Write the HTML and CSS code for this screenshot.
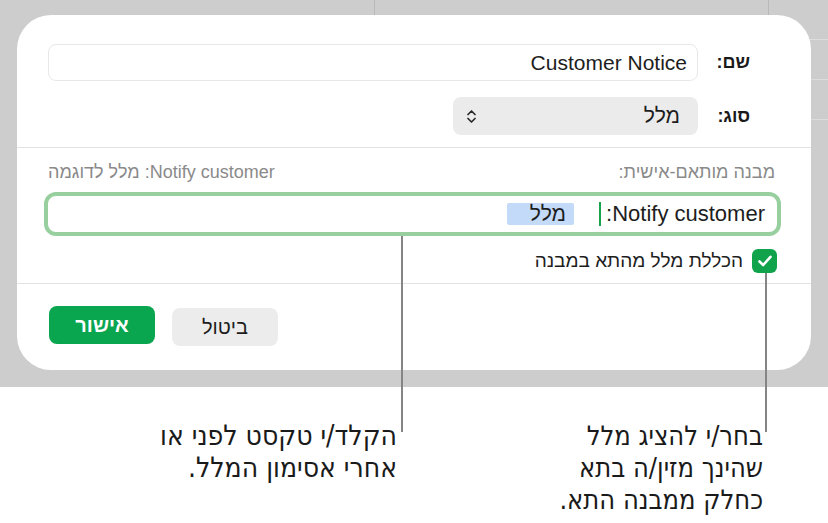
FILE: index.html
```html
<!DOCTYPE html>
<html lang="he">
<head>
  <meta charset="UTF-8">
  <meta name="viewport" content="width=device-width, initial-scale=1.0">
  <title>מבנה מותאם-אישית</title>
  <link rel="stylesheet" href="styles.css">
</head>
<body>
  <div class="page">
    <!-- Spreadsheet behind the dialog -->
    <div class="stage">
      <div class="dialog" dir="rtl">
        <div class="fields">
          <div class="row">
            <span class="label">שם:</span>
            <div class="text-field">Customer Notice</div>
          </div>
          <div class="row">
            <span class="label">סוג:</span>
            <div class="popup">
              <span>מלל</span>
              <svg class="chevron" width="9" height="15" viewBox="0 0 9 15">
                <path d="M1 5.5 L4.5 2 L8 5.5 M1 9.5 L4.5 13 L8 9.5" fill="none" stroke="#2a2a2a" stroke-width="1.7" stroke-linecap="round" stroke-linejoin="round"/>
              </svg>
            </div>
          </div>
        </div>

        <div class="format">
          <div class="format-head">
            <span>מבנה מותאם-אישית:</span>
            <span>Notify customer: מלל לדוגמה</span>
          </div>
          <div class="token-field">Notify customer:<span class="caret"></span><span class="token">מלל</span></div>
          <label class="check-row">
            <span class="checkbox">
              <svg width="16" height="14" viewBox="0 0 16 14">
                <path d="M2.5 7.5 L6.2 11 L13.5 2.8" fill="none" stroke="#fff" stroke-width="2.6" stroke-linecap="round" stroke-linejoin="round"/>
              </svg>
            </span>
            <span>הכללת מלל מהתא במבנה</span>
          </label>
        </div>

        <div class="footer">
          <button class="button cancel">ביטול</button>
          <button class="button ok">אישור</button>
        </div>
      </div>
    </div>

    <!-- Callouts -->
    <div class="notes" dir="rtl">
      <p class="note note-right">בחר/י להציג מלל<br>שהינך מזין/ה בתא<br>כחלק ממבנה התא.</p>
      <p class="note note-left">הקלד/י טקסט לפני או<br>אחרי אסימון המלל.</p>
    </div>
    <span class="leader leader-token"></span>
    <span class="leader leader-check"></span>
  </div>
</body>
</html>
```

FILE: styles.css
```css
body {
  margin: 0;
  background: #fff;
  font-family: "Liberation Sans", "DejaVu Sans", sans-serif;
  color: #1d1d1d;
}

.page {
  position: relative;
  width: 828px;
  height: 523px;
  overflow: hidden;
}

.stage {
  height: 387px;
  padding-top: 15px;
  box-sizing: border-box;
  background-color: #cdcdcd;
  background-image:
    linear-gradient(#b9b9b9, #b9b9b9),
    linear-gradient(#b9b9b9, #b9b9b9),
    repeating-linear-gradient(to bottom, transparent 0 39px, #dddddd 39px 40px);
  background-size: 1px 15px, 1px 15px, 60px 120px;
  background-position: 374px 0, 768px 0, 769px 0;
  background-repeat: no-repeat;
}

.dialog {
  width: 794px;
  height: 355px;
  margin-left: 17px;
  background: #fff;
  border-radius: 34px;
  box-sizing: border-box;
}

.fields {
  display: flex;
  flex-direction: column;
  gap: 16px;
  padding: 29px 61px 12px 31px;
}

.row {
  display: flex;
  align-items: center;
}

.label {
  flex: none;
  width: 52px;
  font-size: 18px;
  font-weight: bold;
  color: #1a1a1a;
}

.text-field {
  flex: 1;
  height: 37px;
  line-height: 35px;
  padding: 0 10px;
  border: 1px solid #e8e8e8;
  border-radius: 8px;
  box-sizing: border-box;
  font-size: 21px;
  color: #1d1d1d;
}

.popup {
  width: 245px;
  height: 38px;
  display: flex;
  align-items: center;
  justify-content: space-between;
  padding: 0 18px 0 14px;
  box-sizing: border-box;
  background: #ebebeb;
  border-radius: 8px;
  font-size: 21px;
}

.format {
  border-top: 1px solid #e3e3e3;
  border-bottom: 1px solid #e3e3e3;
  padding: 13px 34px 10px 31px;
}

.format-head {
  display: flex;
  justify-content: space-between;
  font-size: 18px;
  line-height: 22px;
  color: #8a8a8a;
  padding-right: 2px;
}

.token-field {
  display: flex;
  align-items: center;
  height: 44px;
  margin: 9px -4px 0;
  padding: 0 12px;
  box-sizing: border-box;
  border: 4px solid #98cf9e;
  border-radius: 12px;
  font-size: 22px;
  color: #1d1d1d;
}

.caret {
  width: 2px;
  height: 24px;
  margin: 0 5px 0 25px;
  background: #18a24b;
}

.token {
  width: 67px;
  height: 22px;
  line-height: 22px;
  padding-right: 8px;
  box-sizing: border-box;
  background: #c3dbf8;
  border-radius: 2px;
  font-size: 21px;
}

.check-row {
  display: flex;
  align-items: center;
  gap: 9px;
  margin-top: 13px;
  font-size: 19px;
  color: #1d1d1d;
}

.checkbox {
  width: 25px;
  height: 24px;
  display: flex;
  align-items: center;
  justify-content: center;
  background: #11a24c;
  border-radius: 6px;
}

.footer {
  display: flex;
  justify-content: flex-end;
  align-items: flex-start;
  gap: 17px;
  padding: 22px 0 0 32px;
}

.button {
  width: 106px;
  height: 38px;
  border: none;
  border-radius: 8px;
  font-family: inherit;
  font-size: 20px;
  cursor: pointer;
}

.cancel {
  margin-top: 2px;
  background: #ececec;
  color: #1d1d1d;
}

.ok {
  background: #0aa54f;
  color: #fff;
  font-weight: bold;
}

.notes {
  display: flex;
  gap: 126px;
  padding: 33px 65px 0 0;
}

.note {
  margin: 0;
  font-family: "DejaVu Sans", sans-serif;
  font-stretch: condensed;
  font-size: 27px;
  line-height: 32px;
  color: #1a1a1a;
}

.note-left {
  font-size: 28px;
}

.note-right {
  width: 240px;
}

.note-left {
  width: 260px;
}

.leader {
  position: absolute;
  width: 2px;
  background: #858585;
}

.leader-token {
  left: 401px;
  top: 236px;
  height: 196px;
}

.leader-check {
  left: 765px;
  top: 273px;
  height: 159px;
}
```
